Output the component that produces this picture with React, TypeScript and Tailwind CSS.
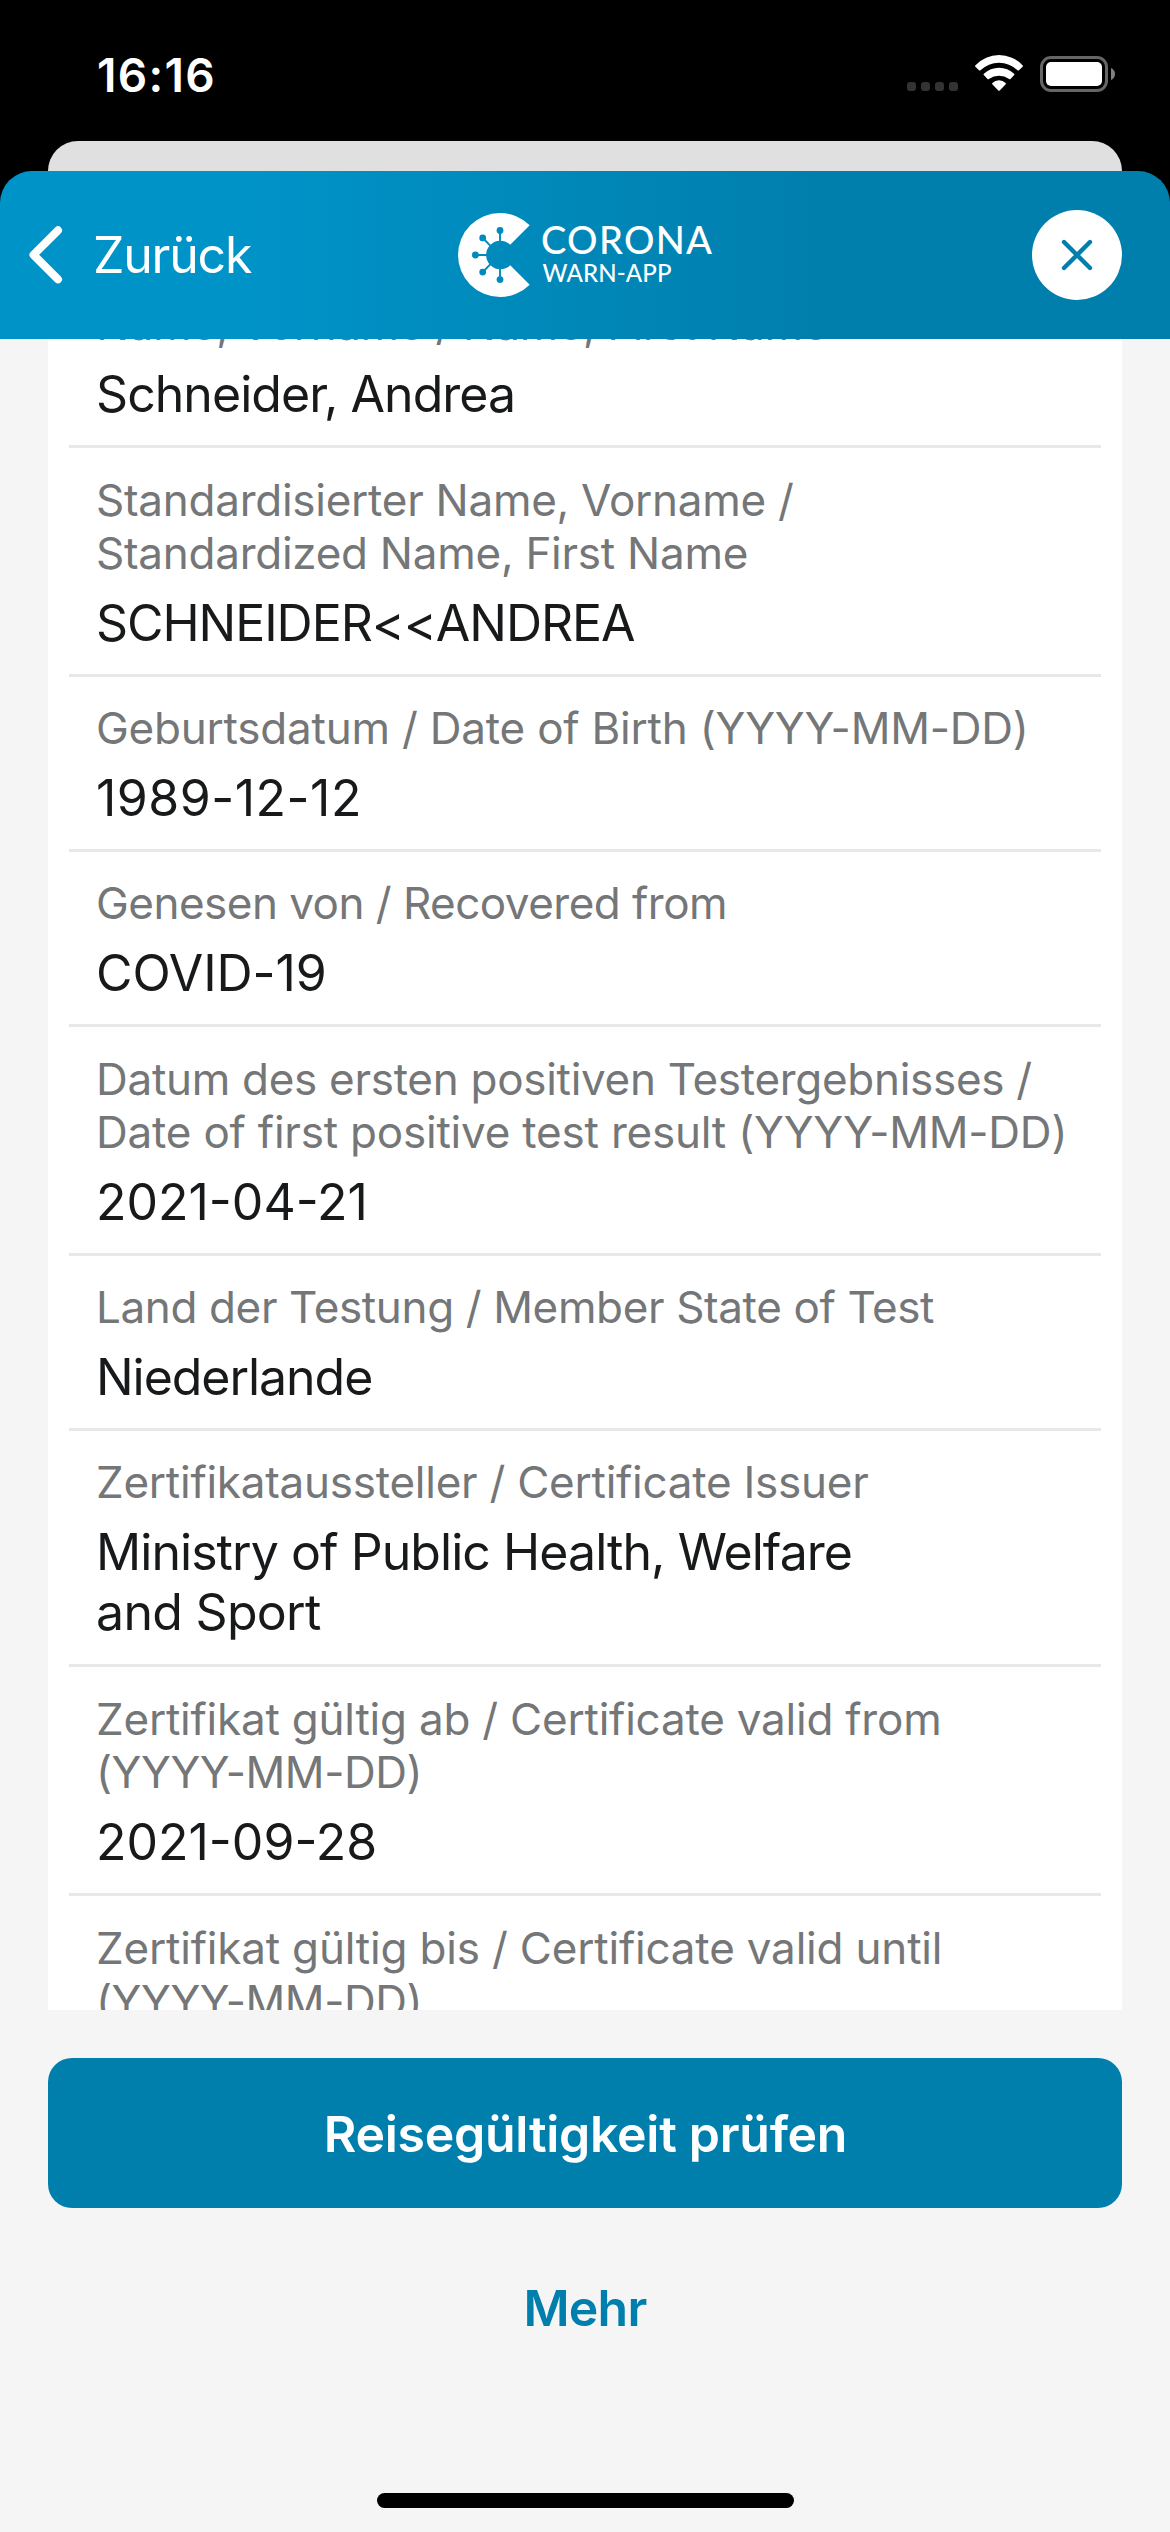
type Line = { text: string; tracking: string };
type Entry = { label: Line[]; value: Line[] };

const entries: Entry[] = [
  {
    label: [{ text: 'Name, Vorname / Name, First Name', tracking: 'tracking-[-0.47px]' }],
    value: [{ text: 'Schneider, Andrea', tracking: 'tracking-[-0.95px]' }],
  },
  {
    label: [
      { text: 'Standardisierter Name, Vorname /', tracking: 'tracking-[-0.26px]' },
      { text: 'Standardized Name, First Name', tracking: 'tracking-[-0.26px]' },
    ],
    value: [{ text: 'SCHNEIDER<<ANDREA', tracking: 'tracking-[-1.05px]' }],
  },
  {
    label: [{ text: 'Geburtsdatum / Date of Birth (YYYY-MM-DD)', tracking: 'tracking-[-0.22px]' }],
    value: [{ text: '1989-12-12', tracking: 'tracking-[0.5px]' }],
  },
  {
    label: [{ text: 'Genesen von / Recovered from', tracking: 'tracking-[-0.52px]' }],
    value: [{ text: 'COVID-19', tracking: 'tracking-[-0.1px]' }],
  },
  {
    label: [
      { text: 'Datum des ersten positiven Testergebnisses /', tracking: 'tracking-[-0.29px]' },
      { text: 'Date of first positive test result (YYYY-MM-DD)', tracking: 'tracking-[-0.21px]' },
    ],
    value: [{ text: '2021-04-21', tracking: 'tracking-[0px]' }],
  },
  {
    label: [{ text: 'Land der Testung / Member State of Test', tracking: 'tracking-[-0.37px]' }],
    value: [{ text: 'Niederlande', tracking: 'tracking-[-1.05px]' }],
  },
  {
    label: [{ text: 'Zertifikataussteller / Certificate Issuer', tracking: 'tracking-[-0.25px]' }],
    value: [
      { text: 'Ministry of Public Health, Welfare', tracking: 'tracking-[-0.94px]' },
      { text: 'and Sport', tracking: 'tracking-[-0.7px]' },
    ],
  },
  {
    label: [
      { text: 'Zertifikat gültig ab / Certificate valid from', tracking: 'tracking-[-0.22px]' },
      { text: '(YYYY-MM-DD)', tracking: 'tracking-[-0.45px]' },
    ],
    value: [{ text: '2021-09-28', tracking: 'tracking-[0px]' }],
  },
  {
    label: [
      { text: 'Zertifikat gültig bis / Certificate valid until', tracking: 'tracking-[-0.19px]' },
      { text: '(YYYY-MM-DD)', tracking: 'tracking-[-0.45px]' },
    ],
    value: [],
  },
];

function rowSize(entry: Entry) {
  if (entry.value.length > 1) return 'h-[236px] pt-[25px]';
  if (entry.label.length > 1) return 'h-[229px] pt-[26px]';
  return 'h-[175px] pt-[25px]';
}

function EntryRow({ entry }: { entry: Entry }) {
  return (
    <div className={`mx-[21px] shrink-0 border-b-[3px] border-[#e8e8e8] px-[27px] whitespace-nowrap ${rowSize(entry)}`}>
      {entry.label.map((line) => (
        <p key={line.text} className={`text-[44px] leading-[53px] text-[#747678] ${line.tracking}`}>
          {line.text}
        </p>
      ))}
      <div className="mt-[13px]">
        {entry.value.map((line) => (
          <p key={line.text} className={`text-[50px] leading-[60px] text-[#17191a] ${line.tracking}`}>
            {line.text}
          </p>
        ))}
      </div>
    </div>
  );
}

function WifiIcon() {
  return (
    <svg className="h-[36px] w-[48px]" viewBox="0 0 48 36" fill="#fff">
      <path d="M.4 11.8Q-.4 11 .5 10.2A32.2 32.2 0 0 1 47.5 10.2Q48.4 11 47.6 11.8L44 15.3Q43.3 15.9 42.5 15.2A26.6 26.6 0 0 0 5.5 15.2Q4.7 15.9 4 15.3Z" />
      <path d="M8.8 20.1Q8.1 19.5 8.9 18.8A21.7 21.7 0 0 1 39.1 18.8Q39.9 19.5 39.2 20.1L35.5 24Q34.9 24.7 34.1 24A17.6 17.6 0 0 0 13.9 24Q13.1 24.7 12.5 24Z" />
      <path d="M17.3 29.3Q16.7 28.7 17.4 28A9.6 9.6 0 0 1 30.6 28Q31.3 28.7 30.7 29.3L24.7 35.4Q24 36 23.3 35.4Z" />
    </svg>
  );
}

function StatusBar() {
  return (
    <div className="flex h-[141px] shrink-0 items-start justify-between pr-[55px] pl-[97px]">
      <span className="mt-[48px] text-[46px] leading-[54px] font-semibold tracking-[1.3px] text-white">16:16</span>
      <div className="mt-[55px] flex items-start">
        <div className="mt-[27px] flex gap-[5px]">
          <span className="size-[9px] rounded-[3px] bg-[#333]" />
          <span className="size-[9px] rounded-[3px] bg-[#333]" />
          <span className="size-[9px] rounded-[3px] bg-[#333]" />
          <span className="size-[9px] rounded-[3px] bg-[#333]" />
        </div>
        <div className="ml-[17px]">
          <WifiIcon />
        </div>
        <div className="mt-px ml-[17px] flex items-center gap-[3px]">
          <div className="h-[36px] w-[68px] rounded-[11px] border-[3px] border-[#666] p-[3px]">
            <div className="h-full rounded-[5px] bg-white" />
          </div>
          <svg className="h-[12px] w-[4px]" viewBox="0 0 4 12" fill="#808080">
            <path d="M0 0C2.6 1 4 3.4 4 6S2.6 11 0 12Z" />
          </svg>
        </div>
      </div>
    </div>
  );
}

function Logo() {
  return (
    <svg className="h-[84px] w-[256px]" viewBox="458 213 256 84">
      <path d="M529.7 225.3A42 42 0 1 0 529.7 284.7L510.2 265.2A14.2 14.2 0 1 1 510.2 244.8Z" fill="#fff" />
      <g stroke="#008bbe" strokeWidth="1.9">
        <path d="M500 230.5V243M482.7 238L491 246.3M475.3 255H488M482.7 272L491 263.7M500 279.5V267" />
      </g>
      <g fill="#008bbe">
        <circle cx="500" cy="230.4" r="3.4" />
        <circle cx="482.7" cy="237.9" r="3.4" />
        <circle cx="475.4" cy="255" r="3.4" />
        <circle cx="482.7" cy="272.1" r="3.4" />
        <circle cx="500" cy="279.6" r="3.4" />
      </g>
      <g fill="#fff" className="font-['Lato',sans-serif] font-medium">
        <text x="541" y="253.5" fontSize="38" textLength="171" lengthAdjust="spacing">CORONA</text>
        <text x="542.5" y="282.3" fontSize="24" textLength="129" lengthAdjust="spacing">WARN-APP</text>
      </g>
    </svg>
  );
}

function NavBar() {
  return (
    <header className="grid h-[168px] shrink-0 grid-cols-[458px_256px_1fr] items-center rounded-t-[32px] bg-linear-to-r from-[#0093c8] from-22% to-[#007fad] to-70%">
      <button className="flex items-center text-left">
        <svg className="ml-[29px] h-[58px] w-[34px]" viewBox="0 0 34 58" fill="none" stroke="#fff" strokeWidth="8" strokeLinecap="round" strokeLinejoin="round">
          <path d="M29 4.3L4.5 28.8L29 53.3" />
        </svg>
        <span className="ml-[30px] text-[50px] leading-[60px] font-normal tracking-[-1.2px] text-white">Zurück</span>
      </button>
      <Logo />
      <button className="mr-[48px] flex size-[90px] items-center justify-center justify-self-end rounded-full bg-white">
        <svg className="size-[32px]" viewBox="0 0 32 32" fill="none" stroke="#007fad" strokeWidth="4.4" strokeLinecap="round">
          <path d="M3 3L29 29M29 3L3 29" />
        </svg>
      </button>
    </header>
  );
}

export default function App() {
  return (
    <div className="flex h-[2532px] w-[1170px] flex-col overflow-hidden bg-black font-['Inter',sans-serif]">
      <StatusBar />
      <div className="mx-[48px] h-[30px] shrink-0 rounded-t-[30px] bg-[#e0e0e0]" />
      <NavBar />
      <main className="h-[1671px] shrink-0 overflow-hidden bg-[#f5f5f5] px-[48px]">
        <div className="-mt-[66px] flex flex-col bg-white">
          {entries.map((entry, i) => (
            <EntryRow key={i} entry={entry} />
          ))}
        </div>
      </main>
      <footer className="flex flex-1 flex-col items-center bg-[#f5f5f5] px-[48px] pt-[48px]">
        <button className="h-[150px] w-full rounded-[24px] bg-[#007fad] pt-[1px] pl-[1px] text-[50px] leading-[60px] font-semibold tracking-[-0.29px] text-white">
          Reisegültigkeit prüfen
        </button>
        <button className="mt-[24px] h-[150px] w-full pt-[1px] text-[50px] leading-[60px] font-semibold tracking-[-0.8px] text-[#007fad]">
          Mehr
        </button>
        <div className="mt-auto mb-[24px] h-[15px] w-[417px] rounded-full bg-black" />
      </footer>
    </div>
  );
}
